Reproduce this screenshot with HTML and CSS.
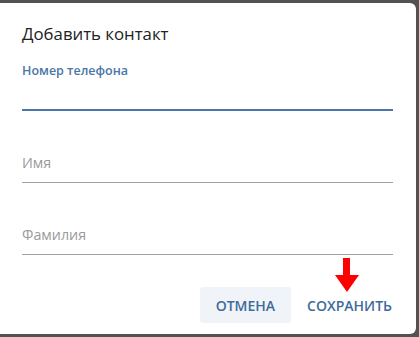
FILE: index.html
```html
<!DOCTYPE html>
<html lang="ru">
<head>
<meta charset="utf-8">
<title>Добавить контакт</title>
<link rel="stylesheet" href="styles.css">
</head>
<body>
<div class="page">
  <div class="dialog">
    <h1 class="title">Добавить контакт</h1>
    <div class="field field-active">
      <div class="label">Номер телефона</div>
      <div class="input"></div>
    </div>
    <div class="field">
      <div class="input placeholder">Имя</div>
    </div>
    <div class="field">
      <div class="input placeholder">Фамилия</div>
    </div>
    <div class="footer">
      <button class="btn btn-cancel">Отмена</button>
      <button class="btn btn-save">Сохранить</button>
    </div>
    <svg class="arrow" width="24" height="34" viewBox="0 0 24 34">
      <rect x="8" y="0" width="7" height="18" fill="#ff0000"/>
      <polygon points="0,17 24,17 12,34" fill="#ff0000"/>
    </svg>
  </div>
</div>
</body>
</html>
```
FILE: styles.css
```css
html, body {
  margin: 0;
  padding: 0;
}
body {
  font-family: "Open Sans", "Noto Sans", sans-serif;
}
.page {
  width: 419px;
  height: 337px;
  box-sizing: border-box;
  background: #525252;
  padding: 3px 3px 3px 0;
}
.dialog {
  position: relative;
  height: 100%;
  box-sizing: border-box;
  background: #fff;
  border-radius: 0 6px 6px 0;
  padding: 21px 23px 0 22px;
  display: flex;
  flex-direction: column;
}
.title {
  margin: 0;
  font-size: 16.8px;
  line-height: 20px;
  font-weight: 400;
  color: #222;
}
.field {
  border-bottom: 1px solid #a0a0a0;
  height: 72px;
  box-sizing: border-box;
  display: flex;
  flex-direction: column;
  justify-content: flex-end;
}
.field-active {
  height: auto;
  margin-top: 19px;
  border-bottom: 2px solid #4a76a8;
}
.label {
  font-size: 12.5px;
  line-height: 16px;
  font-weight: 600;
  color: #4a76a8;
}
.input {
  height: 20px;
  padding-bottom: 9px;
  font-size: 14.3px;
  line-height: 20px;
  color: #333;
}
.field-active .input {
  height: 30px;
  padding-bottom: 0;
}
.placeholder {
  color: #9a9a9a;
}
.footer {
  display: flex;
  justify-content: flex-end;
  margin: 32px -15px 0 0;
}
.btn {
  font-family: inherit;
  border: 0;
  background: transparent;
  height: 36px;
  padding: 0 16px;
  border-radius: 3px;
  font-size: 14px;
  font-weight: 600;
  text-transform: uppercase;
  color: #3e6b99;
  cursor: pointer;
}
.btn-cancel {
  background: #f0f4f8;
}
.arrow {
  position: absolute;
  left: 335px;
  top: 255px;
}
```
